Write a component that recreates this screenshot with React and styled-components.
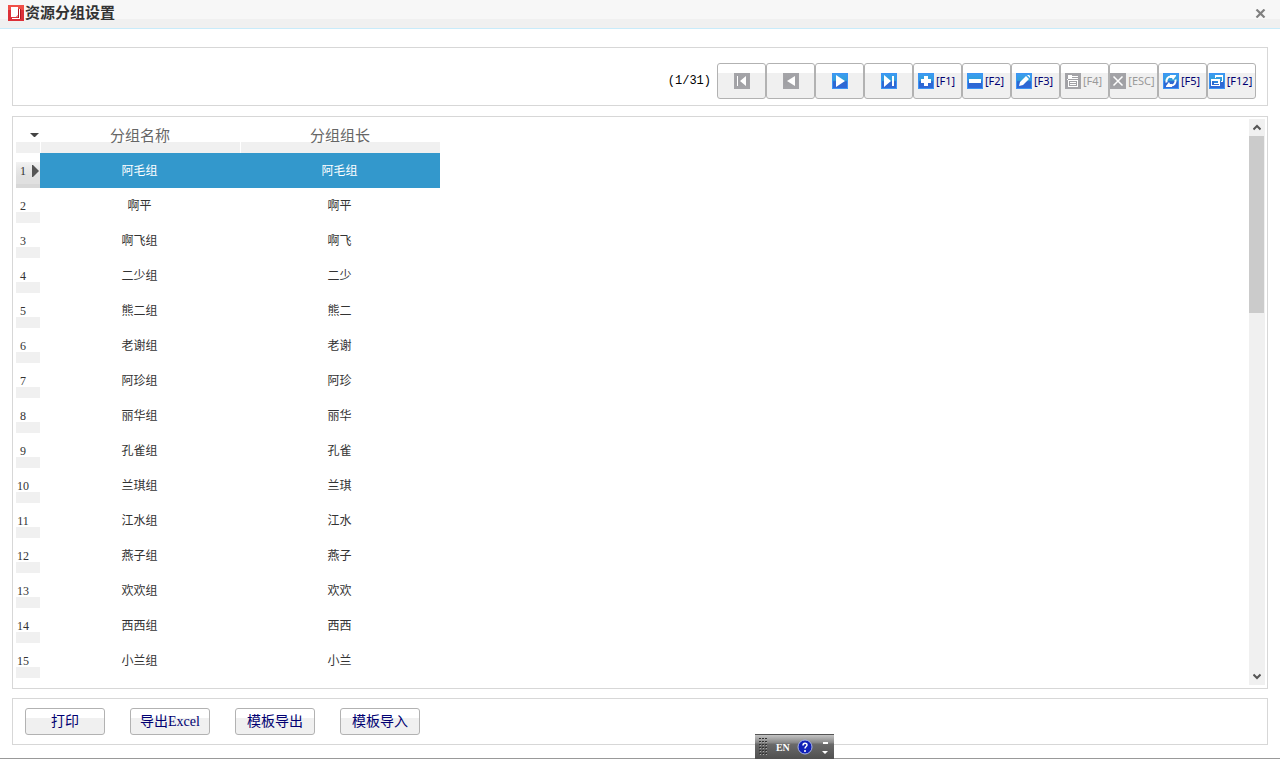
import styled, { createGlobalStyle } from "styled-components";

const GlobalStyle = createGlobalStyle`
  * {
    box-sizing: border-box;
  }
  body {
    margin: 0;
    background: #fff;
    font-family: "Liberation Serif", "Noto Sans CJK SC", sans-serif;
    font-size: 12px;
    color: #333;
  }
  button {
    font-family: inherit;
    padding: 0;
  }
`;

const Page = styled.div`
  position: relative;
  display: flex;
  flex-direction: column;
  min-height: 100vh;
  border-bottom: 1px solid #999;
`;

const TitleBar = styled.header`
  display: flex;
  align-items: center;
  height: 29px;
  padding: 0 14px 2px 8px;
  border-bottom: 1px solid #c8ebfa;
  background: linear-gradient(#f7f7f7 19px, #f0f0f0 19px);
`;

const Title = styled.h1`
  flex: 1;
  margin: 0 0 0 1px;
  font-size: 15px;
  line-height: 20px;
  font-weight: 700;
`;

const CloseButton = styled.button`
  display: flex;
  border: 0;
  background: none;
`;

const Main = styled.main`
  flex: 1;
  display: flex;
  flex-direction: column;
  padding: 18px 12px 13px;
`;

const Panel = styled.section`
  display: flex;
  border: 1px solid #d7d7d7;
`;

const Toolbar = styled(Panel)`
  align-items: center;
  justify-content: flex-end;
  padding: 15px 11px 6px;
`;

const Counter = styled.span`
  margin-right: 6px;
  font-family: "Liberation Mono", monospace;
  font-size: 12px;
  line-height: 16px;
  color: #000;
`;

const Button = styled.button`
  display: flex;
  align-items: center;
  justify-content: center;
  border: 1px solid #b2b2b2;
  border-radius: 3px;
  background: linear-gradient(#fff 9px, #f0f0f0 9px);
  color: #000072;
`;

const ToolButton = styled(Button)`
  gap: 2px;
  width: 49px;
  height: 36px;
  padding-right: ${(props) => (props.$labelled ? "2px" : "0")};
  font-family: "Noto Sans", sans-serif;
  font-size: 11px;
  line-height: 16px;
  &:disabled {
    color: #999;
  }
`;

const FooterButton = styled(Button)`
  width: 80px;
  height: 27px;
  font-size: 14px;
  line-height: 20px;
`;

const GridPanel = styled(Panel)`
  flex: 1;
  justify-content: space-between;
  align-items: stretch;
  margin: 10px 0 9px;
  padding: 1px 2px 3px 3px;
`;

const Footer = styled(Panel)`
  gap: 25px;
  padding: 9px 12px;
`;

const Table = styled.table`
  align-self: flex-start;
  width: 424px;
  table-layout: fixed;
  border-collapse: separate;
  border-spacing: 0;
`;

const Row = styled.tr`
  height: 35px;
  background: ${(props) => (props.$selected ? "#3398cc" : "#fff")};
  color: ${(props) => (props.$selected ? "#fff" : "#333")};
`;

const Cell = styled.td`
  padding: 0 1px 0 0;
  text-align: center;
  font-size: 12px;
  line-height: 18px;
`;

const ColumnHeader = styled.th`
  width: ${(props) => props.$width};
  height: 35px;
  padding: 0;
  background: linear-gradient(#fff 24px, #f0f0f0 24px);
  color: #666;
  font-size: 15px;
  line-height: 20px;
  font-weight: 400;
  & + & {
    border-left: 1px solid #fff;
    padding-right: 1px;
  }
`;

const RowHeader = styled.th`
  padding: 0;
  color: #333;
  font-weight: 400;
  line-height: 18px;
  background: ${(props) =>
    props.$selected
      ? "linear-gradient(#fff 9px, #f2f2f2 9px, #e8e8e8 16px, #e0e0e0 24px, #e0e0e0 31px, #d8d8d8 31px)"
      : "linear-gradient(#fff 24px, #f0f0f0 24px)"};
`;

const RowMark = styled.div`
  display: flex;
  align-items: center;
`;

const RowNumber = styled.span`
  width: 14px;
  margin-right: 2px;
  text-align: center;
`;

const CornerButton = styled.button`
  display: flex;
  margin-left: 14px;
  border: 0;
  background: none;
`;

const ScrollBar = styled.div`
  display: flex;
  flex-direction: column;
  width: 16px;
  margin-top: 1px;
  background: #f0f0f0;
`;

const ScrollButton = styled.button`
  display: flex;
  align-items: center;
  justify-content: center;
  height: 17px;
  border: 0;
  background: none;
`;

const ScrollTrack = styled.div`
  flex: 1;
`;

const ScrollThumb = styled.div`
  width: 15px;
  height: 177px;
  background: #cbcbcb;
`;

const LanguageBar = styled.div`
  position: absolute;
  left: 59%;
  bottom: -1px;
  display: flex;
  align-items: center;
  justify-content: space-between;
  width: 79px;
  height: 25px;
  padding: 0 5px 0 3px;
  border-top: 1px solid #555;
  background: linear-gradient(#c4c4c4, #858585 8px, #6a6a6a 9px, #505050);
  color: #fff;
  font-size: 10px;
  font-weight: 700;
`;

const BarButton = styled.button`
  display: flex;
  border: 0;
  background: none;
  color: inherit;
  font-size: inherit;
  font-weight: inherit;
`;

const glyphs = {
  first: <path d="M3 3h1v10H3zM12 3v10L6 8z" fill="#fff" />,
  prev: <path d="M12 3v10L4 8z" fill="#fff" />,
  next: <path d="M4 2v12l9-6z" fill="#fff" />,
  last: <path d="M3 2v12l7-6zM11 3h2v10h-2z" fill="#fff" />,
  add: <path d="M6 3h4v3h3v4h-3v3H6v-3H3V6h3z" fill="#fff" />,
  remove: <path d="M2 6h12v4H2z" fill="#fff" />,
  edit: <path d="M3 13l1-4 6-6 3 3-6 6zM11 2h2l1 1v2l-3-3z" fill="#fff" />,
  save: (
    <path
      d="M3 2h4v1h6v1H7v1h6v1H3zM2 6h1v1H2zM3 7h10v7H3zM4 8v5h8V8zM5 9h6v1H5zM5 11h6v1H5z"
      fill="#fff"
      fillRule="evenodd"
    />
  ),
  cancel: <path d="M3.500 3.500l9 9M12.500 3.500l-9 9" fill="none" stroke="#fff" strokeWidth="1.500" />,
  refresh: (
    <>
      <path
        d="M3.500 9.500C3 6 5 3.500 8 3.500M12.500 6.500C13 10 11 12.500 8 12.500"
        fill="none"
        stroke="#fff"
        strokeWidth="2"
      />
      <path d="M7 2h6v1l-3 4-1-2H7zM9 14H3v-1l3-4 1 2h2z" fill="#fff" />
    </>
  ),
  exit: (
    <>
      <path d="M6 2h8v7h-2V8h1V4H7v1H6z" fill="#fff" />
      <path d="M2 6h9v7H2zM3 8v4h7V8z" fill="#fff" fillRule="evenodd" />
      <path d="M5 8h5v3H5z" fill="#2c84dc" />
      <path d="M5 11h5v-3h-1v2H5z" fill="#fff" />
    </>
  ),
};

const ToolIcon = ({ name, disabled }) => (
  <svg width="16" height="16" viewBox="0 0 16 16" aria-hidden="true">
    <defs>
      <linearGradient id={`fill-${name}`} x2="0" y2="1">
        <stop offset="0" stopColor={disabled ? "#a4a4a8" : "#3c9cf0"} />
        <stop offset="0.45" stopColor={disabled ? "#a0a0a4" : "#30a0d8"} />
        <stop offset="0.55" stopColor={disabled ? "#a0a0a4" : "#2c68d0"} />
        <stop offset="1" stopColor={disabled ? "#a4a4a8" : "#3068d8"} />
      </linearGradient>
    </defs>
    <path d="M0 0h16v16H0z" fill={disabled ? "#a4a4a8" : "#3c94f4"} />
    <path d="M1 1h14v14H1z" fill={`url(#fill-${name})`} />
    {glyphs[name]}
  </svg>
);

const AppIcon = () => (
  <svg width="16" height="16" viewBox="0 0 16 16" aria-hidden="true">
    <path d="M0 0h16v16H0z" fill="#dc3038" />
    <path d="M0 0h16v5H0z" fill="#f05048" />
    <path d="M10 4h3v10H5v-1h5z" fill="#b01820" />
    <path d="M4 13h7V4h1v10H4z" fill="#fff" />
    <path d="M3 2h7v8l-2 2H3z" fill="#fff" />
    <path d="M10 10v2H8z" fill="#d8a0a0" />
  </svg>
);

const tools = [
  { icon: "first", title: "首条", disabled: true },
  { icon: "prev", title: "上一条", disabled: true },
  { icon: "next", title: "下一条" },
  { icon: "last", title: "末条" },
  { icon: "add", label: "[F1]" },
  { icon: "remove", label: "[F2]" },
  { icon: "edit", label: "[F3]" },
  { icon: "save", label: "[F4]", disabled: true },
  { icon: "cancel", label: "[ESC]", disabled: true },
  { icon: "refresh", label: "[F5]" },
  { icon: "exit", label: "[F12]" },
];

const groups = [
  ["阿毛组", "阿毛组"],
  ["啊平", "啊平"],
  ["啊飞组", "啊飞"],
  ["二少组", "二少"],
  ["熊二组", "熊二"],
  ["老谢组", "老谢"],
  ["阿珍组", "阿珍"],
  ["丽华组", "丽华"],
  ["孔雀组", "孔雀"],
  ["兰琪组", "兰琪"],
  ["江水组", "江水"],
  ["燕子组", "燕子"],
  ["欢欢组", "欢欢"],
  ["西西组", "西西"],
  ["小兰组", "小兰"],
];

const actions = ["打印", "导出Excel", "模板导出", "模板导入"];

const GroupTable = () => (
  <Table>
    <thead>
      <tr>
        <ColumnHeader $width="24px">
          <CornerButton aria-label="菜单">
            <svg width="9" height="5" viewBox="0 0 9 5">
              <path d="M0 0h9L5 4H4z" fill="#444" />
            </svg>
          </CornerButton>
        </ColumnHeader>
        <ColumnHeader $width="200px">分组名称</ColumnHeader>
        <ColumnHeader $width="200px">分组组长</ColumnHeader>
      </tr>
    </thead>
    <tbody>
      {groups.map(([name, leader], i) => (
        <Row key={name} $selected={i === 0}>
          <RowHeader $selected={i === 0}>
            <RowMark>
              <RowNumber>{i + 1}</RowNumber>
              {i === 0 && (
                <svg width="7" height="12" viewBox="0 0 7 12">
                  <path d="M0 0h1l6 6-6 6H0z" fill="#555" />
                </svg>
              )}
            </RowMark>
          </RowHeader>
          <Cell>{name}</Cell>
          <Cell>{leader}</Cell>
        </Row>
      ))}
    </tbody>
  </Table>
);

const Scroller = () => (
  <ScrollBar>
    <ScrollButton aria-label="向上">
      <svg width="8" height="7" viewBox="0 0 8 7">
        <path d="M0.500 5.500L4 2l3.500 3.500" fill="none" stroke="#555" strokeWidth="2" />
      </svg>
    </ScrollButton>
    <ScrollTrack>
      <ScrollThumb />
    </ScrollTrack>
    <ScrollButton aria-label="向下">
      <svg width="8" height="7" viewBox="0 0 8 7">
        <path d="M0.500 1.500L4 5l3.500-3.500" fill="none" stroke="#555" strokeWidth="2" />
      </svg>
    </ScrollButton>
  </ScrollBar>
);

const InputBar = () => (
  <LanguageBar>
    <svg width="10" height="18" viewBox="0 0 10 18" aria-hidden="true">
      {[0, 3, 6, 9, 12, 15].map((y) => (
        <g key={y}>
          <path d={`M2 ${y + 1}h1v1H2zM5 ${y + 1}h1v1H5zM8 ${y + 1}h1v1H8z`} fill="#aaa" />
          <path d={`M1 ${y}h2v1H1zM4 ${y}h2v1H4zM7 ${y}h2v1H7z`} fill="#333" />
        </g>
      ))}
    </svg>
    <BarButton>EN</BarButton>
    <BarButton aria-label="帮助">
      <svg width="16" height="16" viewBox="0 0 16 16">
        <circle cx="8" cy="8" r="7" fill="#1020b8" stroke="#a8b4e8" />
        <path
          d="M6 6.500C6 3.500 10 3.500 10 6 10 7.500 8 7.500 8 9.500M8 11v2"
          fill="none"
          stroke="#fff"
          strokeWidth="1.500"
        />
      </svg>
    </BarButton>
    <BarButton aria-label="选项">
      <svg width="8" height="16" viewBox="0 0 8 16">
        <path d="M2 3h5v2H2zM1 12h6l-3 3z" fill="#fff" />
      </svg>
    </BarButton>
  </LanguageBar>
);

const App = () => (
  <>
    <GlobalStyle />
    <Page>
      <TitleBar>
        <AppIcon />
        <Title>资源分组设置</Title>
        <CloseButton aria-label="关闭">
          <svg width="11" height="9" viewBox="0 0 11 9">
            <path d="M1.500 0.500l8 8M9.500 0.500l-8 8" stroke="#808080" strokeWidth="2.200" />
          </svg>
        </CloseButton>
      </TitleBar>
      <Main>
        <Toolbar>
          <Counter>(1/31)</Counter>
          {tools.map(({ icon, label, title, disabled }) => (
            <ToolButton key={icon} $labelled={!!label} disabled={disabled} aria-label={title}>
              <ToolIcon name={icon} disabled={disabled} />
              {label}
            </ToolButton>
          ))}
        </Toolbar>
        <GridPanel>
          <GroupTable />
          <Scroller />
        </GridPanel>
        <Footer>
          {actions.map((action) => (
            <FooterButton key={action}>{action}</FooterButton>
          ))}
        </Footer>
      </Main>
      <InputBar />
    </Page>
  </>
);

export default App;
